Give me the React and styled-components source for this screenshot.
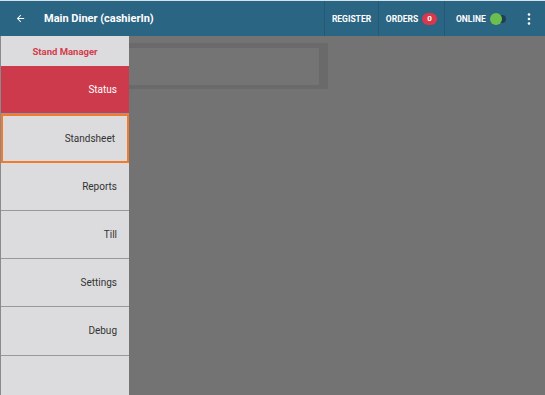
import styled, { createGlobalStyle } from 'styled-components';

const GlobalStyle = createGlobalStyle`
  html, body {
    margin: 0;
    padding: 0;
    width: 545px;
    height: 395px;
    overflow: hidden;
    font-family: Roboto, "Liberation Sans", sans-serif;
  }
`;

const Screen = styled.div`
  display: flex;
  flex-direction: column;
  width: 545px;
  height: 395px;
  background: #737373;
`;

const TopBar = styled.div`
  display: flex;
  align-items: stretch;
  height: 36px;
  flex-shrink: 0;
  background: #2b6584;
  border-top: 1px solid #d6e2ea;
  box-sizing: border-box;
  color: #fff;
`;

const BackButton = styled.div`
  display: flex;
  align-items: center;
  justify-content: center;
  width: 40px;
`;

const Title = styled.div`
  display: flex;
  align-items: center;
  flex: 1;
  padding-left: 4px;
  font-size: 11px;
  font-weight: 700;
`;

const BarItem = styled.div`
  display: flex;
  align-items: center;
  justify-content: ${p => p.$align || 'center'};
  gap: 4px;
  width: ${p => p.$width}px;
  padding-left: ${p => p.$padLeft || 0}px;
  box-sizing: border-box;
  border-left: 1px solid rgba(0, 0, 0, 0.12);
  font-size: 8.5px;
  font-weight: 700;
`;

const Badge = styled.span`
  display: inline-flex;
  align-items: center;
  justify-content: center;
  width: 15px;
  height: 12px;
  border-radius: 6px;
  background: #d9374a;
  font-size: 8px;
`;

const Toggle = styled.span`
  position: relative;
  display: inline-block;
  width: 15px;
  height: 8px;
  margin-left: 1px;
  border-radius: 4px;
  background: #1f3e52;
  &::before {
    content: '';
    position: absolute;
    left: -1px;
    top: -2px;
    width: 12px;
    height: 12px;
    border-radius: 50%;
    background: #6cbf4f;
  }
`;

const MenuDots = styled.div`
  display: flex;
  align-items: center;
  justify-content: center;
  width: 33px;
`;

const Body = styled.div`
  display: flex;
  flex: 1;
  min-height: 0;
`;

const Sidebar = styled.div`
  display: flex;
  flex-direction: column;
  width: 129px;
  flex-shrink: 0;
  background: #dcdcde;
  border-left: 1px solid #8a8a8a;
  box-sizing: border-box;
  z-index: 1;
`;

const SideHeader = styled.div`
  display: flex;
  align-items: center;
  justify-content: center;
  height: 30px;
  flex-shrink: 0;
  color: #d33c4c;
  font-size: 9.5px;
  font-weight: 700;
`;

const SideItem = styled.div`
  display: flex;
  align-items: center;
  justify-content: flex-end;
  height: 48.25px;
  flex-shrink: 0;
  padding-right: 12px;
  box-sizing: border-box;
  font-size: 10px;
  color: ${p => (p.$active ? '#fff' : '#333')};
  background: ${p => (p.$active ? '#cd3a4c' : '#dcdcde')};
  border-bottom: 1px solid #999;
  border: ${p => (p.$focused ? '2px solid #f07a2e' : undefined)};
`;

const SideRest = styled.div`
  flex: 1;
`;

const Main = styled.div`
  flex: 1;
  padding-top: 7px;
  margin-left: -10px;
`;

const GhostCard = styled.div`
  width: 209px;
  height: 46px;
  box-sizing: border-box;
  padding: 5px 9px 4px 0;
  background: #6a6a6a;
`;

const GhostInner = styled.div`
  height: 100%;
  background: #747474;
  border-radius: 1px;
`;

const items = ['Standsheet', 'Reports', 'Till', 'Settings', 'Debug'];

export default function App() {
  return (
    <Screen>
      <GlobalStyle />
      <TopBar>
        <BackButton>
          <svg width="11" height="11" viewBox="0 0 24 24">
            <path d="M20 11H7.83l5.59-5.59L12 4l-8 8 8 8 1.41-1.41L7.83 13H20v-2z" fill="#fff" />
          </svg>
        </BackButton>
        <Title>Main Diner (cashierIn)</Title>
        <BarItem $width={54}>REGISTER</BarItem>
        <BarItem $width={66}>
          ORDERS <Badge>0</Badge>
        </BarItem>
        <BarItem $width={68} $align="flex-start" $padLeft={11}>
          ONLINE <Toggle />
        </BarItem>
        <MenuDots>
          <svg width="4" height="12" viewBox="0 0 4 12">
            <circle cx="2" cy="1.5" r="1.3" fill="#fff" />
            <circle cx="2" cy="6" r="1.3" fill="#fff" />
            <circle cx="2" cy="10.5" r="1.3" fill="#fff" />
          </svg>
        </MenuDots>
      </TopBar>
      <Body>
        <Sidebar>
          <SideHeader>Stand Manager</SideHeader>
          <SideItem $active>Status</SideItem>
          {items.map((label, i) => (
            <SideItem key={label} $focused={i === 0}>
              {label}
            </SideItem>
          ))}
          <SideRest />
        </Sidebar>
        <Main>
          <GhostCard>
            <GhostInner />
          </GhostCard>
        </Main>
      </Body>
    </Screen>
  );
}
